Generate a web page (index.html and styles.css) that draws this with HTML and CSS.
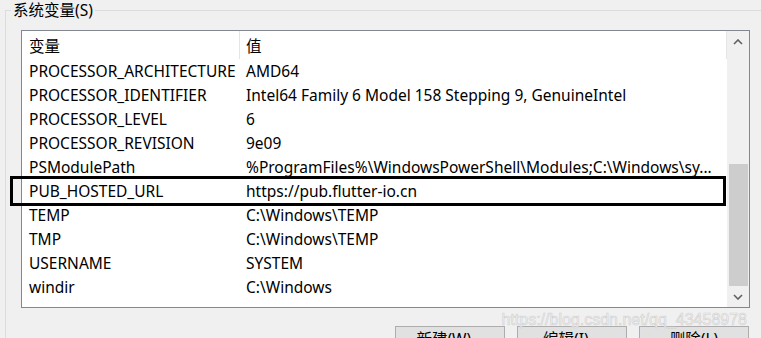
FILE: index.html
```html
<!DOCTYPE html>
<html lang="zh-CN">
<head>
  <meta charset="UTF-8" />
  <title>系统变量</title>
  <link rel="stylesheet" href="styles.css">
</head>
<body>

  <!-- GROUP BOX -->
  <fieldset class="group">
    <legend>系统变量(S)</legend>

    <!-- VARIABLE LIST -->
    <div class="listbox">
      <div class="list-main">
        <div class="list-head">
          <div class="col-name">变量</div>
          <div class="col-value">值</div>
        </div>
        <div class="row"><div class="col-name">PROCESSOR_ARCHITECTURE</div><div class="col-value">AMD64</div></div>
        <div class="row"><div class="col-name">PROCESSOR_IDENTIFIER</div><div class="col-value">Intel64 Family 6 Model 158 Stepping 9, GenuineIntel</div></div>
        <div class="row"><div class="col-name">PROCESSOR_LEVEL</div><div class="col-value">6</div></div>
        <div class="row"><div class="col-name">PROCESSOR_REVISION</div><div class="col-value">9e09</div></div>
        <div class="row"><div class="col-name">PSModulePath</div><div class="col-value">%ProgramFiles%\WindowsPowerShell\Modules;C:\Windows\sy...</div></div>
        <div class="row marked"><div class="col-name">PUB_HOSTED_URL</div><div class="col-value">https://pub.flutter-io.cn</div></div>
        <div class="row"><div class="col-name">TEMP</div><div class="col-value">C:\Windows\TEMP</div></div>
        <div class="row"><div class="col-name">TMP</div><div class="col-value">C:\Windows\TEMP</div></div>
        <div class="row"><div class="col-name">USERNAME</div><div class="col-value">SYSTEM</div></div>
        <div class="row"><div class="col-name">windir</div><div class="col-value">C:\Windows</div></div>
      </div>

      <!-- SCROLLBAR -->
      <div class="scrollbar">
        <div class="arrow">
          <svg width="10" height="6" viewBox="0 0 10 6"><path d="M1 5 L5 1 L9 5" fill="none" stroke="#606060" stroke-width="1.6"/></svg>
        </div>
        <div class="track">
          <div class="thumb"></div>
        </div>
        <div class="arrow">
          <svg width="10" height="6" viewBox="0 0 10 6"><path d="M1 1 L5 5 L9 1" fill="none" stroke="#606060" stroke-width="1.6"/></svg>
        </div>
      </div>
    </div>

    <!-- BUTTONS -->
    <div class="buttons">
      <div class="watermark">https://blog.csdn.net/qq_43458978</div>
      <button>新建(W)...</button>
      <button>编辑(I)...</button>
      <button>删除(L)</button>
    </div>
  </fieldset>

</body>
</html>
```

FILE: styles.css
```css
/* Base */
* { box-sizing: border-box; margin: 0; padding: 0; }
body {
  font-family: "Noto Sans", "Noto Sans CJK SC", sans-serif;
  font-size: 15.5px;
  background: #f0f0f0;
  color: #000;
  overflow: hidden;
  height: 338px;
}

/* Group box */
.group {
  margin-left: 5px;
  width: 800px;
  border: 1px solid #dcdcdc;
  padding: 10px 0 0 15px;
}
.group legend {
  padding: 0 2px;
  margin-left: -10px;
  line-height: 20px;
}

/* List */
.listbox {
  display: flex;
  width: 729px;
  height: 278px;
  background: #fff;
  border: 1px solid #828790;
}
.list-main {
  flex: 1;
}
.list-head {
  display: flex;
  height: 28px;
  align-items: center;
  border-right: 1px solid #e5e5e5;
}
.list-head .col-name {
  border-right: 1px solid #e5e5e5;
  height: 100%;
  display: flex;
  align-items: center;
}
.row {
  display: flex;
  height: 24px;
  align-items: center;
  position: relative;
  white-space: nowrap;
}
.col-name {
  width: 218px;
  padding-left: 7px;
}
.col-value {
  padding-left: 6px;
}
.row.marked::after {
  content: "";
  position: absolute;
  left: -12px;
  right: 1px;
  top: -3px;
  bottom: -3px;
  border: 3px solid #000;
}

/* Scrollbar */
.scrollbar {
  width: 22px;
  display: flex;
  flex-direction: column;
  background: #f0f0f0;
}
.arrow {
  height: 21px;
  display: flex;
  align-items: center;
  justify-content: center;
}
.track {
  flex: 1;
  padding: 0 1px 0 2px;
  display: flex;
  flex-direction: column;
  justify-content: flex-end;
}
.thumb {
  height: 122px;
  background: #cdcdcd;
}

/* Buttons */
.buttons {
  display: flex;
  gap: 12px;
  padding: 18px 0 0 374px;
  position: relative;
}
.buttons button {
  width: 110px;
  height: 24px;
  background: #e1e1e1;
  border: 1px solid #adadad;
  font: inherit;
  color: #000;
}
.watermark {
  position: absolute;
  right: 57px;
  top: 3px;
  font-family: "Liberation Sans", sans-serif;
  font-size: 16px;
  color: #f4f4f4;
  -webkit-text-stroke: 0.6px #d0d0d0;
}
```
